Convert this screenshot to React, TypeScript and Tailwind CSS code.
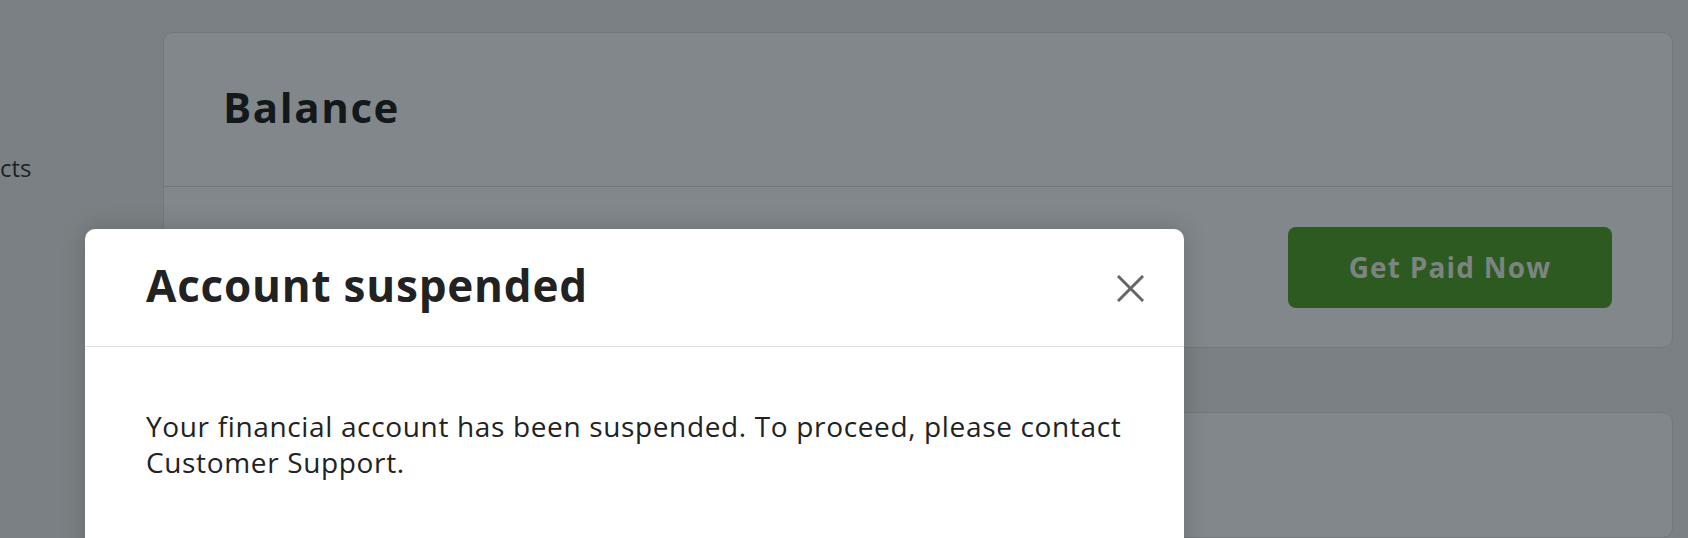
import React from "react";

export default function App() {
  const font = { fontFamily: '"Open Sans", "Noto Sans", sans-serif' };
  return (
    <div className="relative h-[538px] w-[1688px] overflow-hidden bg-[#7b8084]" style={font}>
      <div className="flex h-full">
        {/* Sidebar */}
        <aside className="w-[163px] shrink-0 pt-[150px]">
          <div className="text-[24px] font-medium leading-[36px] text-[#1c2226]">cts</div>
        </aside>
        {/* Main */}
        <main className="flex-1 pr-[15px] pt-[32px] flex flex-col gap-[64px]">
          <section className="rounded-[10px] border border-[#71777b] bg-[#82878b]">
            <div className="flex h-[154px] items-center px-[59px] pb-[4px] border-b border-[#71777b]">
              <h2 className="text-[42px] font-bold leading-[1.2] tracking-[1.6px] text-[#13181b]">Balance</h2>
            </div>
            <div className="flex h-[160px] items-center justify-end px-[60px]">
              <button className="flex h-[81px] w-[324px] items-center justify-center rounded-[8px] bg-[#2d5a20] text-[28px] font-bold tracking-[1.2px] text-[#7c8481]">
                Get Paid Now
              </button>
            </div>
          </section>
          <section className="h-[200px] rounded-[10px] border border-[#71777b] bg-[#82878b]" />
        </main>
      </div>

      {/* Modal */}
      <div className="absolute left-[85px] top-[229px] w-[1099px] h-[360px] rounded-[10px] bg-white shadow-[0_0_24px_rgba(0,0,0,0.18)]">
        <div className="flex h-[118px] items-center justify-between pl-[61px] pr-[40px] pb-[5px] border-b border-[#e1e1e1]">
          <h1 className="text-[44px] font-bold leading-[1.2] tracking-[0.8px] text-[#222222]">Account suspended</h1>
          <button aria-label="Close" className="mt-[6px] flex h-[27px] w-[27px] items-center justify-center">
            <svg width="27" height="27" viewBox="0 0 27 27" fill="none">
              <path d="M2 2 L25 25 M25 2 L2 25" stroke="#666666" strokeWidth="3" strokeLinecap="square" />
            </svg>
          </button>
        </div>
        <div className="pl-[61px] pr-[40px] pt-[61px]">
          <p className="text-[28px] leading-[36px] tracking-[0.65px] text-[#222222]">
            Your financial account has been suspended. To proceed, please contact Customer Support.
          </p>
        </div>
      </div>
    </div>
  );
}
